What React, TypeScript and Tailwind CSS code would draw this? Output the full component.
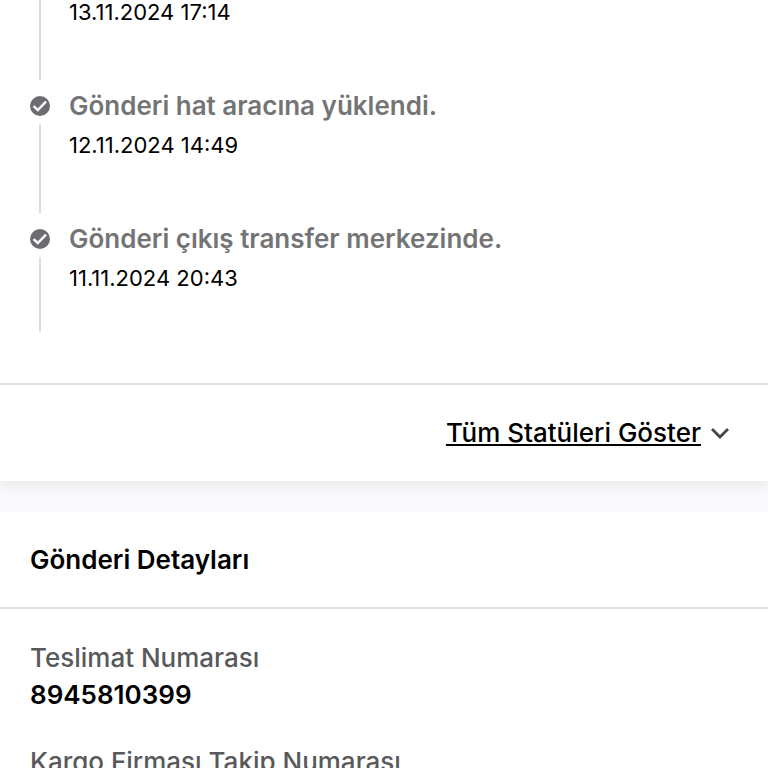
const events = [
  { title: '', date: '13.11.2024 17:14', line: 'h-20' },
  { title: 'Gönderi hat aracına yüklendi.', date: '12.11.2024 14:49', line: 'h-[89px]' },
  { title: 'Gönderi çıkış transfer merkezinde.', date: '11.11.2024 20:43', line: 'h-[75px]' },
];

function CheckBadge() {
  return (
    <svg viewBox="0 0 20 20" className="mt-2 mb-2 block size-5" aria-hidden="true">
      <circle cx="10" cy="10" r="10" fill="#6c6d70" />
      <path d="M3.6 10.2 7.8 14 16 5.6" fill="none" stroke="#fff" strokeWidth="2.4" />
    </svg>
  );
}

function Event({ title, date, line }: { title: string; date: string; line: string }) {
  return (
    <li className="flex gap-[19px]">
      <div className="flex w-5 flex-col items-center">
        {title && <CheckBadge />}
        <div className={`w-0.5 bg-[#dcdcde] ${line}`} />
      </div>
      <div>
        {title && <h3 className="mb-[9px] text-[26px] leading-9 font-semibold text-[#737476]">{title}</h3>}
        <p className="text-[22px] leading-6">{date}</p>
      </div>
    </li>
  );
}

export default function App() {
  return (
    <main className="min-h-screen bg-[#f9f9fb] font-['Inter',sans-serif] text-black">
      <section className="bg-white shadow-[0_4px_12px_rgba(0,0,0,0.07)]">
        <ol className="flex flex-col gap-2 px-[30px] pb-[51px]">
          {events.map((e) => (
            <Event key={e.date} {...e} />
          ))}
        </ol>
        <div className="flex justify-end border-t-2 border-[#e3e3e5] px-[38px] py-[30px]">
          <button className="flex items-center gap-[9px] text-[26px] leading-9 font-medium">
            <span className="underline decoration-2 underline-offset-2 [text-decoration-skip-ink:none]">Tüm Statüleri Göster</span>
            <svg viewBox="0 0 20 20" className="size-5" aria-hidden="true">
              <path d="M2 6l8 8 8-8" fill="none" stroke="#444" strokeWidth="2.8" />
            </svg>
          </button>
        </div>
      </section>
      <section className="mt-[31px] bg-white">
        <h2 className="border-b-2 border-[#e3e3e5] px-[30px] pt-[30px] pb-[29px] text-[26px] leading-9 font-semibold">
          Gönderi Detayları
        </h2>
        <dl className="px-[30px] pt-[30px] text-[26px] leading-[37px]">
          <dt className="font-medium text-[#58595b]">Teslimat Numarası</dt>
          <dd className="font-semibold">8945810399</dd>
          <dt className="mt-[30px] font-medium text-[#58595b]">Kargo Firması Takip Numarası</dt>
        </dl>
      </section>
    </main>
  );
}
